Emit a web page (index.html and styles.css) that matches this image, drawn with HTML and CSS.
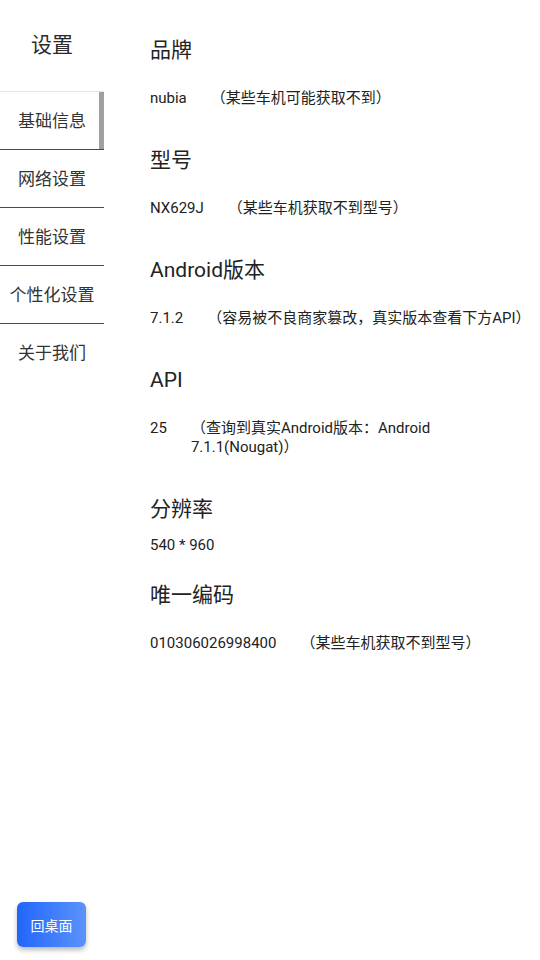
FILE: index.html
```html
<!DOCTYPE html>
<html lang="zh-CN">
<head>
<meta charset="utf-8">
<title>设置</title>
<link rel="stylesheet" href="styles.css">
</head>
<body>
<div class="app">
  <aside class="sidebar">
    <div class="side-title">设置</div>
    <nav class="menu">
      <div class="menu-item active">基础信息</div>
      <div class="menu-item">网络设置</div>
      <div class="menu-item">性能设置</div>
      <div class="menu-item">个性化设置</div>
      <div class="menu-item last">关于我们</div>
    </nav>
    <button class="home-btn">回桌面</button>
  </aside>
  <main class="content">
    <section class="section">
      <h2 class="heading">品牌</h2>
      <div class="row"><span class="value">nubia</span><span class="note">（某些车机可能获取不到）</span></div>
    </section>
    <section class="section">
      <h2 class="heading">型号</h2>
      <div class="row"><span class="value">NX629J</span><span class="note">（某些车机获取不到型号）</span></div>
    </section>
    <section class="section">
      <h2 class="heading">Android版本</h2>
      <div class="row"><span class="value">7.1.2</span><span class="note">（容易被不良商家篡改，真实版本查看下方API）</span></div>
    </section>
    <section class="section">
      <h2 class="heading">API</h2>
      <div class="row"><span class="value">25</span><span class="note">（查询到真实Android版本：Android 7.1.1(Nougat)）</span></div>
    </section>
    <section class="section">
      <h2 class="heading">分辨率</h2>
      <div class="row tight"><span class="value">540 * 960</span></div>
    </section>
    <section class="section">
      <h2 class="heading">唯一编码</h2>
      <div class="row"><span class="value">010306026998400</span><span class="note">（某些车机获取不到型号）</span></div>
    </section>
  </main>
</div>
</body>
</html>
```

FILE: styles.css
```css
* { box-sizing: border-box; }

html, body {
  margin: 0;
  padding: 0;
  background: #ffffff;
}

body {
  font-family: "Roboto", "Noto Sans CJK SC", sans-serif;
  color: #222222;
  text-spacing-trim: space-all;
  font-feature-settings: normal;
}

.app {
  display: flex;
  width: 540px;
  height: 960px;
}

.sidebar {
  width: 104px;
  flex: 0 0 104px;
  display: flex;
  flex-direction: column;
  height: 100%;
}

.side-title {
  height: 91px;
  display: flex;
  align-items: center;
  justify-content: center;
  font-size: 21px;
  color: #2a2a2a;
  padding-bottom: 6px;
}

.menu {
  display: flex;
  flex-direction: column;
}

.menu-item {
  height: 58px;
  display: flex;
  align-items: center;
  justify-content: center;
  font-size: 17px;
  color: #333333;
  border-bottom: 1px solid #4a4a4a;
  white-space: nowrap;
  padding-bottom: 3px;
}

.menu-item.active {
  height: 59px;
  border-top: 1px solid #e6e6e6;
  box-shadow: inset -5px 0 0 #a0a0a0;
}

.menu-item.last {
  border-bottom: none;
}

.home-btn {
  margin-top: auto;
  margin-left: 17px;
  margin-bottom: 13px;
  width: 69px;
  height: 45px;
  border: none;
  border-radius: 6px;
  background: linear-gradient(to right, #2166fb, #5b93fb);
  color: #ffffff;
  font-family: "Roboto", "Noto Sans CJK SC", sans-serif;
  font-size: 14px;
  box-shadow: 0 3px 5px rgba(0, 0, 0, 0.28);
  padding: 0;
}

.content {
  flex: 1;
  padding: 36px 4px 0 46px;
}

.section {
  margin: 0;
}

.heading {
  margin: 0;
  font-size: 21px;
  font-weight: normal;
  line-height: 28px;
  color: #222222;
}

.row {
  display: flex;
  align-items: flex-start;
  margin: 25px 0 38px;
  font-size: 15px;
  line-height: 19px;
}

.row.tight {
  margin: 13px 0 26px;
}

.value {
  white-space: nowrap;
  flex: 0 0 auto;
}

.note {
  margin-left: 24px;
  flex: 1 1 auto;
  min-width: 0;
}
```
